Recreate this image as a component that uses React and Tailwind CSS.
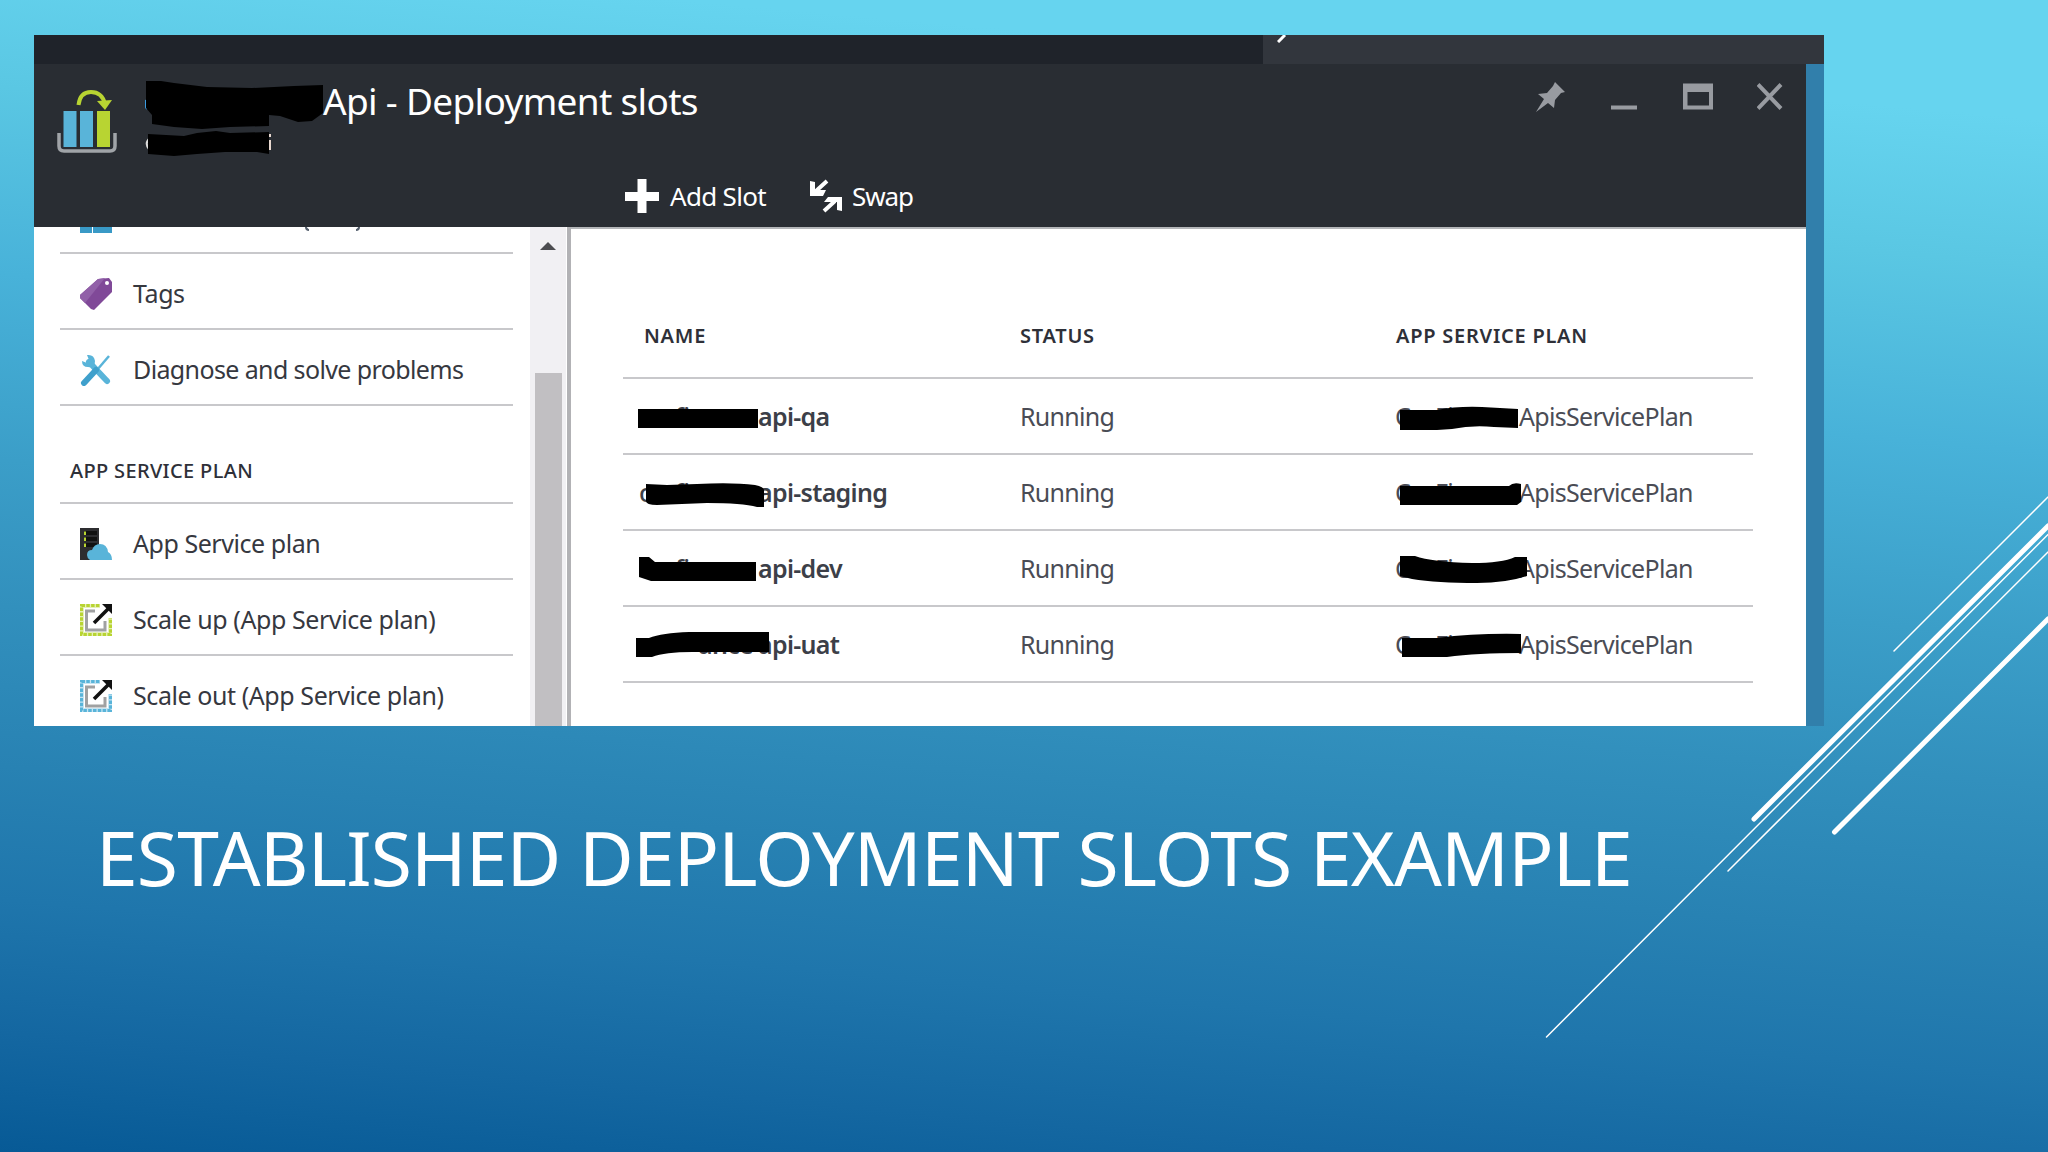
import React from 'react';

// =====================================
// DATA
// =====================================
const MENU_TOP = [
  { label: 'Tags', icon: 'tag', tracking: 'tracking-[-0.4px]' },
  { label: 'Diagnose and solve problems', icon: 'tools', tracking: 'tracking-[-0.62px]' },
];

const MENU_PLAN = [
  { label: 'App Service plan', icon: 'server', tracking: 'tracking-[-0.45px]' },
  { label: 'Scale up (App Service plan)', icon: 'scaleUp', tracking: 'tracking-[-0.42px]' },
  { label: 'Scale out (App Service plan)', icon: 'scaleOut', tracking: 'tracking-[-0.42px]' },
];

// Each marker is drawn in a box of 140x32 that starts at the left of its cell
const SLOTS = [
  {
    name: 'api-qa',
    nameMark: 'M1 6H121V25H1Z',
    planMark: 'M3 7L40 7Q60 3 85 4L121 6V25L97 24Q75 22 55 26L40 27H3Z',
  },
  {
    name: 'api-staging',
    nameMark: 'M9 5L30 6L60 5Q95 3 118 6Q127 8 127 11V28L120 28Q105 24 70 24L20 26Q9 26 9 22Z',
    planMark: 'M3 7H112Q116 3 124 5V23L120 26H3Z',
  },
  {
    name: 'api-dev',
    nameMark: 'M2 2H12L18 7H119V26H14L2 22Z',
    planMark: 'M3 1H18Q35 7 75 8Q105 8 118 2H130V21Q110 28 80 28Q40 28 15 24L3 21Z',
  },
  {
    name: 'api-uat',
    nameMark: 'M-1 7H12Q25 2 52 1H132V21H55Q28 21 15 26H-1Z',
    planMark: 'M5 7H40Q80 2 124 3V22Q80 22 50 26H5Z',
  },
];

// =====================================
// ICONS
// =====================================
function Svg({ children, w, h, className = '' }) {
  return <svg width={w} height={h} viewBox={`0 0 ${w} ${h}`} className={`shrink-0 ${className}`} fill="none" aria-hidden="true">{children}</svg>;
}

function SlotsLogo() {
  return <Svg w={62} h={66}>
            <path d="M3 44V57Q3 62 8 62H54Q59 62 59 57V44" stroke="#a0a4a8" strokeWidth="3.500" />
            <path d="M7.500 22H20.500V58H7.500ZM24 22H37V58H24Z" fill="#59b4d9" />
            <path d="M41 22H54V58H41Z" fill="#b8d432" />
            <path d="M22.500 16Q24 3 35 3Q46 3 49 15" stroke="#b8d432" strokeWidth="4" />
            <path d="M41 12L56 11L49 21Z" fill="#b8d432" />
        </Svg>;
}

function MenuIcon({ name }) {
  if (name === 'tag') {
    return <Svg w={32} h={32}>
                <path d="M18 1L29 0L32 4V14L14 32L11 31L0 20V17Z" fill="#804998" />
                <path d="M18 1L25 0L5 25L0 20V17Z" fill="#9160a8" />
                <circle cx="27" cy="5" r="2" fill="#fff" />
            </Svg>;
  }
  if (name === 'tools') {
    return <Svg w={32} h={32}>
                <path d="M9 8L27 27" stroke="#59b4d9" strokeWidth="6" strokeLinecap="round" />
                <path d="M7 1Q14 0 15 7Q15 14 8 13Q2 13 2 7L7 9L9 6Z" fill="#59b4d9" />
                <path d="M29 2L17 16" stroke="#59b4d9" strokeWidth="2.500" />
                <path d="M16 16L4 29" stroke="#3fa0cc" strokeWidth="6" strokeLinecap="round" />
            </Svg>;
  }
  if (name === 'server') {
    return <Svg w={32} h={32}>
                <path d="M0 0H19V32H0Z" fill="#2d2d30" />
                <path d="M4 5H17M4 11H17M4 17H17" stroke="#111" strokeWidth="4" />
                <path d="M5 3.500V7M5 9.500V13M5 15.500V19" stroke="#b8d432" strokeWidth="2" />
                <path d="M10 32Q7 30 7 27Q7 22 12 22Q14 16 20 16Q27 16 28 24Q32 26 32 32Z" fill="#59b4d9" />
            </Svg>;
  }
  const color = name === 'scaleUp' ? '#b8d432' : '#59b4d9';
  const tint = name === 'scaleUp' ? '#e6f0b8' : '#c6e5f3';
  return <Svg w={32} h={32}>
            <rect x="2" y="2" width="28" height="28" stroke={tint} strokeWidth="4" />
            <rect x="1.500" y="1.500" width="29" height="29" stroke={color} strokeWidth="3" strokeDasharray="3.500 1.300" />
            <path d="M20 0H32V14H27V5H20Z" fill="#fff" />
            <path d="M15 7H6.500V26H25V17" stroke="#a0a1a2" strokeWidth="3" />
            <path d="M14 19L28 5" stroke="#111" strokeWidth="3.500" />
            <path d="M22 0H32V10Z" fill="#111" />
        </Svg>;
}

function WindowControls() {
  return <div className="flex text-[#989ba1]">
            <Svg w={30} h={32}>
                <path d="M19 1L29 11L25 12L19 19L18 27L12 22L0 31L8 18L2 13L11 12L17 5Z" fill="currentColor" />
            </Svg>
            <Svg w={26} h={32} className="ml-[45px]">
                <path d="M0 24.500H26V28.500H0Z" fill="currentColor" />
            </Svg>
            <Svg w={31} h={32} className="ml-[46px]">
                <path fillRule="evenodd" d="M0 2.500H30V28.500H0ZM4.500 11V24.500H26V11Z" fill="currentColor" />
            </Svg>
            <Svg w={26} h={32} className="ml-[43px]">
                <path d="M1 3.500L24 27.500M24 3.500L1 27.500" stroke="currentColor" strokeWidth="4" />
            </Svg>
        </div>;
}

function Marker({ d }) {
  return <svg width="140" height="32" viewBox="0 0 140 32" className="absolute top-[5px] left-0 overflow-visible" aria-hidden="true">
            <path d={d} fill="#000" />
        </svg>;
}

// =====================================
// PORTAL BLADE
// =====================================
function BladeHeader() {
  return <header className="h-[163px] w-[1772px] bg-[#292d33] text-white">
            <div className="flex h-[103px]">
                <div className="pt-[25px] pl-[22px]"><SlotsLogo /></div>
                <div className="relative ml-[27px] w-[560px]">
                    <h1 className="mt-[9px] ml-[178px] text-[37px] leading-[56px] tracking-[-0.68px] whitespace-nowrap">Api - Deployment slots</h1>
                    <svg width="190" height="80" viewBox="145 80 190 80" className="absolute top-[16px] left-0" aria-hidden="true">
                        <path d="M146 100Q144 105 147 109" stroke="#3a9be0" strokeWidth="2" fill="none" />
                        <path d="M150 138Q144 143 149 149" stroke="#ddd" strokeWidth="2" fill="none" />
                        <path d="M270 134V137M270 140V150" stroke="#e8d8d0" strokeWidth="2" />
                        <path d="M146 81H161L174 83L207 87L252 88L294 86L323 85V113L312 121L298 122L280 116L269 115V126L230 127L202 129L174 127L152 124L152 115L146 108Z" fill="#000" />
                        <path d="M148 134L184 136L197 133L216 131L230 133L269 132V154L257 152H225L197 154L174 156L148 154Z" fill="#000" />
                    </svg>
                </div>
                <div className="ml-auto pt-[17px] pr-[23px]"><WindowControls /></div>
            </div>
            <div className="flex h-[60px] items-center pb-[2px] pl-[591px] text-[26px] tracking-[-0.7px]">
                <Svg w={34} h={34}>
                    <path d="M12.500 0H21.500V13H34V22H21.500V34H12.500V22H0V13H12.500Z" fill="#fff" />
                </Svg>
                <span className="ml-[11px] w-[140px]">Add Slot</span>
                <Svg w={32} h={34}>
                    <path d="M17 2L6 12M14 32L25 22" stroke="#fff" strokeWidth="4" />
                    <path d="M0 2L5 3V11H16L13 17H0ZM32 32L27 31V23H14L18 18H32Z" fill="#fff" />
                </Svg>
                <span className="ml-[10px] tracking-[-1.1px]">Swap</span>
            </div>
        </header>;
}

function MenuRow({ item, last = false }) {
  return <li className={`flex h-[76px] items-center border-b-2 pt-[6px] pl-[20px] ${last ? 'border-transparent' : 'border-[#c8c8cb]'}`}>
            <MenuIcon name={item.icon} />
            <span className={`ml-[21px] text-[25px] whitespace-nowrap text-[#36383f] ${item.tracking}`}>{item.label}</span>
        </li>;
}

function Sidebar() {
  return <aside className="flex h-[499px] w-[537px] overflow-hidden bg-white">
            <nav className="ml-[26px] w-[453px]">
                <div className="flex h-[27px] items-start border-b-2 border-[#c8c8cb] pl-[20px]">
                    <span className="h-[6px] w-[12px] bg-[#3999c6]" />
                    <span className="ml-px h-[6px] w-[19px] bg-[#3999c6]" />
                    <span className="ml-[193px] h-[4px] w-[4px] rounded-bl-full border-b-2 border-l-2 border-[#55606e]" />
                    <span className="ml-[47px] h-[4px] w-[4px] rounded-br-full border-r-2 border-b-2 border-[#55606e]" />
                </div>
                <ul>{MENU_TOP.map((item) => <MenuRow key={item.label} item={item} />)}</ul>
                <h2 className="flex h-[98px] items-end border-b-2 border-[#c8c8cb] pb-[16px] pl-[10px] text-[20px] font-medium tracking-[0.35px] text-[#2e3038]">APP SERVICE PLAN</h2>
                <ul>{MENU_PLAN.map((item, i) => <MenuRow key={item.label} item={item} last={i === 2} />)}</ul>
            </nav>
            <div className="ml-[17px] flex w-[36px] flex-col items-center bg-[#f1f0f3]">
                <Svg w={16} h={8} className="mt-[15px]"><path d="M8 0L16 8H0Z" fill="#4c4c50" /></Svg>
                <div className="mt-[123px] w-[27px] flex-1 bg-[#c1bfc2]" />
            </div>
            <div className="ml-auto w-[4px] bg-[#b2b2b5]" />
        </aside>;
}

function SlotTable() {
  return <section className="h-[499px] w-[1235px] border-t-2 border-[#b4b6b9] bg-white">
            <div className="ml-[52px] w-[1130px] pt-[74px] text-[25px] tracking-[-0.7px] text-[#4a4c55]">
                <div className="grid h-[76px] grid-cols-[376px_376px_378px] items-center border-b-2 border-[#c8c8cb] pb-[8px] pl-[21px] text-[20px] font-semibold tracking-[0.75px] text-[#2e3038]">
                    <span>NAME</span>
                    <span>STATUS</span>
                    <span>APP SERVICE PLAN</span>
                </div>
                {SLOTS.map((slot) => <div key={slot.name} className="grid h-[76px] grid-cols-[376px_376px_378px] items-center border-b-2 border-[#c8c8cb] pt-[2px] pl-[14px]">
                    <div className="relative pl-[121px] font-semibold text-[#3c3f48]">
                        <span className="absolute top-0 left-[2px] font-medium">c</span>
                        {slot.name === 'api-uat'
        ? <span className="absolute top-0 left-[61px]">ance</span>
        : <span className="absolute top-0 left-[38px] font-medium">fi</span>}
                        {slot.name}
                        <Marker d={slot.nameMark} />
                    </div>
                    <div className="pl-[7px]">Running</div>
                    <div className="relative pl-[130px]">
                        <span className="absolute top-0 left-[6px]">C</span>
                        <span className="absolute top-0 left-[46px]">Fi</span>
                        ApisServicePlan
                        <span className="absolute top-0 left-[8px]"><Marker d={slot.planMark} /></span>
                    </div>
                </div>)}
            </div>
        </section>;
}

// =====================================
// SLIDE
// =====================================
export default function App() {
  return <div className="relative h-[1152px] w-[2048px] overflow-hidden bg-linear-[5deg,#075a96_0%,#1467a1_9%,#1f76ac_19%,#2882b3_29%,#3290bd_41%,#3b9ec8_52%,#48b2d9_66%,#5ac7e3_80%,#66d4ef_91%] font-['Noto_Sans',sans-serif]">
            <svg width="2048" height="1152" viewBox="0 0 2048 1152" className="absolute inset-0" stroke="#fff" strokeLinecap="round" aria-hidden="true">
                <path d="M1894 651L2048 497M1546.500 1037L2048 534.500M1728 871L2048 552" strokeWidth="1.500" />
                <path d="M1754 819L2048 526M1834.500 832L2048 619" strokeWidth="5" />
            </svg>
            <div className="relative pt-[35px] pl-[34px]">
                <div className="flex h-[29px] w-[1790px] bg-[#1f232a]">
                    <div className="ml-auto w-[561px] bg-[#32363d] pl-[14px]">
                        <Svg w={10} h={8}><path d="M1 7L8 0" stroke="#fff" strokeWidth="3" /></Svg>
                    </div>
                </div>
                <div className="w-[1790px] bg-[#317fab]">
                    <BladeHeader />
                    <div className="flex w-[1772px] bg-white">
                        <Sidebar />
                        <SlotTable />
                    </div>
                </div>
            </div>
            <h2 className="relative mt-[80px] ml-[96px] text-[75px] leading-[102px] tracking-[-0.86px] whitespace-nowrap text-white">ESTABLISHED DEPLOYMENT SLOTS EXAMPLE</h2>
        </div>;
}
